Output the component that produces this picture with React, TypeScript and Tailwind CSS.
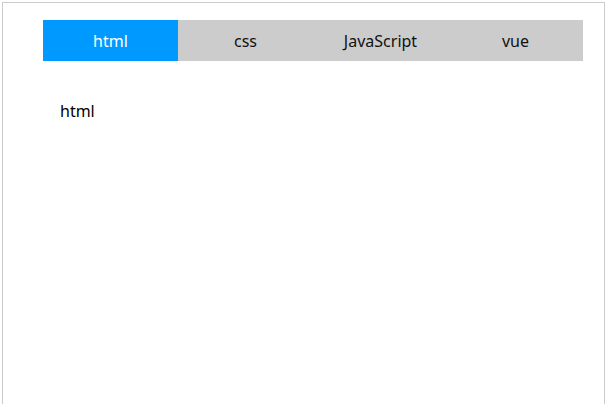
import React, { useState } from "react";

const tabs = ["html", "css", "JavaScript", "vue"];

export default function App() {
  const [active, setActive] = useState(0);
  return (
    <div className="bg-white w-[611px] h-[404px] overflow-hidden" style={{ fontFamily: '"Noto Sans", "Open Sans", sans-serif' }}>
      <div className="ml-[2px] mt-[2px] w-[603px] h-[440px] border border-[#cccccc] pl-[40px] pt-[17px]">
        <div className="flex w-[540px] h-[41px]">
          {tabs.map((t, i) => (
            <button
              key={t}
              onClick={() => setActive(i)}
              className={
                "w-[135px] h-[41px] flex items-center justify-center text-[16px] " +
                (i === active ? "bg-[#0099ff] text-white" : "bg-[#cccccc] text-[#111111]")
              }
            >
              {t}
            </button>
          ))}
        </div>
        <div className="pl-[17px] pt-[40px] text-[16px] leading-[21px] text-black">{tabs[active]}</div>
      </div>
    </div>
  );
}
